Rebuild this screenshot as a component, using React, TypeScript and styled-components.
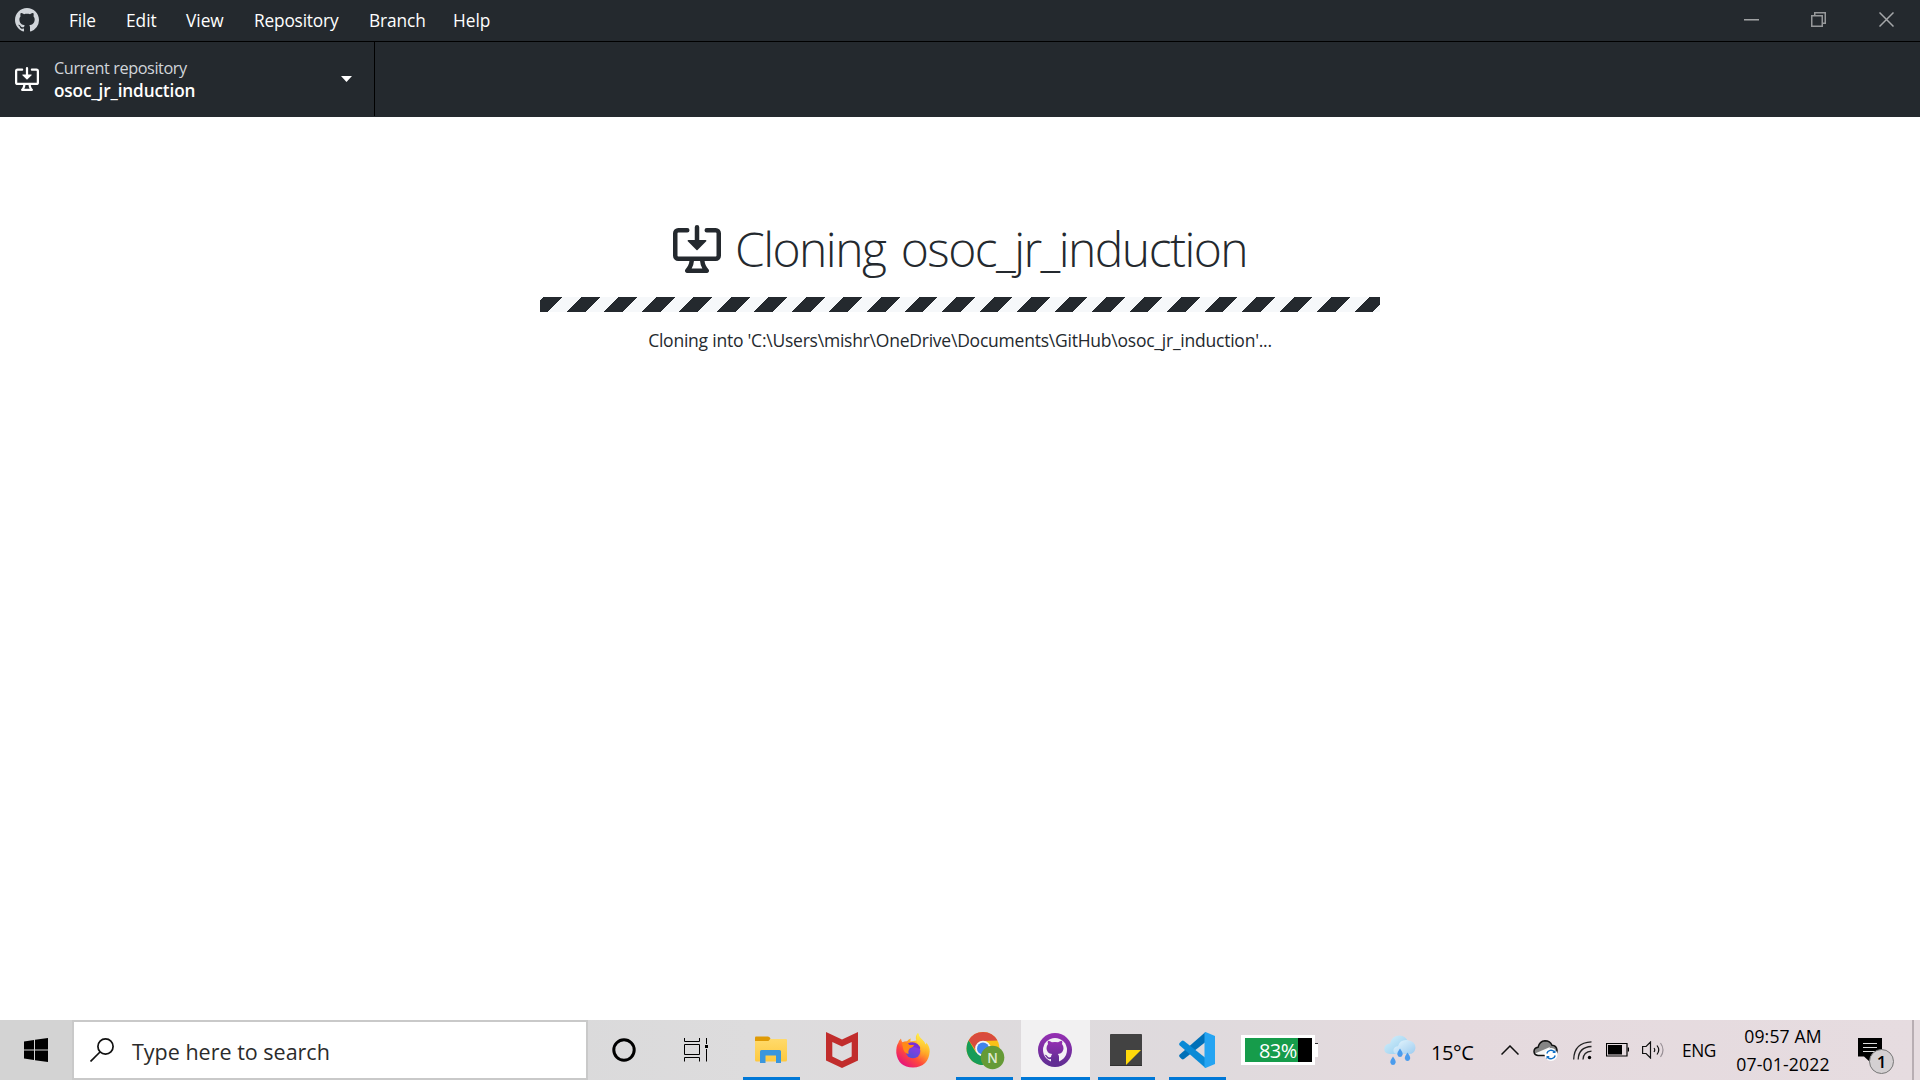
import React from "react";
import styled, { createGlobalStyle } from "styled-components";

const GlobalStyle = createGlobalStyle`
  * { box-sizing: border-box; }
  body { margin: 0; background: #fff; overflow: hidden; }
  svg { display: block; flex: none; }
`;

const Screen = styled.div`
  width: 1920px;
  height: 1080px;
  display: flex;
  flex-direction: column;
  background: #fff;
  color: #24292e;
  font-family: "Open Sans", "Noto Sans", sans-serif;
`;

const MenuBar = styled.header`
  height: 42px;
  flex: none;
  display: flex;
  align-items: center;
  padding: 0 0 1px 15px;
  background: #24292e;
  border-bottom: 1px solid #000;
`;

const Menus = styled.nav`
  display: flex;
  flex: 1;
  margin: 2px 0 0 15px;
`;

const MenuItem = styled.span<{ $w: number; $ls?: number }>`
  width: ${(p) => p.$w}px;
  padding-left: 15px;
  color: #fff;
  font-size: 17.3px;
  line-height: 24px;
  letter-spacing: ${(p) => p.$ls ?? 0}px;
  white-space: nowrap;
`;

const WindowButtons = styled.div`
  display: flex;
  height: 40px;
`;

const WindowButton = styled.div`
  width: 67.5px;
  display: flex;
  justify-content: center;
  align-items: center;
  padding-bottom: 1px;
`;

const Toolbar = styled.div`
  height: 75px;
  flex: none;
  display: flex;
  background: #24292e;
`;

const RepoButton = styled.div`
  width: 375px;
  height: 74px;
  display: flex;
  align-items: center;
  padding: 0 22px 0 15px;
  border-right: 1px solid #000;
`;

const RepoText = styled.div`
  flex: 1;
  margin-left: 15px;
  display: flex;
  flex-direction: column;
  white-space: nowrap;
`;

const RepoCaption = styled.span`
  color: #d1d5da;
  font-size: 16.3px;
  line-height: 22px;
  letter-spacing: -0.43px;
`;

const RepoName = styled.span`
  color: #fff;
  font-size: 17.2px;
  font-weight: 600;
  line-height: 23px;
  letter-spacing: -0.13px;
`;

const Main = styled.main`
  flex: 1;
  display: flex;
  flex-direction: column;
  align-items: center;
  padding-top: 98px;
`;

const Title = styled.h1`
  margin: 0;
  height: 68px;
  display: flex;
  align-items: center;
  font-size: 48px;
  font-weight: 300;
  line-height: 68px;
  letter-spacing: -1.55px;
  word-spacing: 4.5px;
  white-space: nowrap;
`;

const TitleText = styled.span`
  margin-left: 14px;
`;

const Progress = styled.div`
  width: 840px;
  height: 15px;
  margin-top: 14px;
  background: repeating-linear-gradient(
    135deg,
    #f6f8fa 0,
    #f6f8fa 2.8px,
    #24292e 2.8px,
    #24292e 16px,
    #f6f8fa 16px,
    #f6f8fa 26.52px
  );
`;

const Detail = styled.p`
  margin: 16px 0 0;
  font-size: 17.5px;
  line-height: 25px;
  letter-spacing: -0.23px;
  white-space: nowrap;
`;

const Taskbar = styled.footer`
  height: 60px;
  flex: none;
  display: flex;
  color: #000;
  background: linear-gradient(90deg, #d4d4d4 0, #d9d9da 500px, #dddcdd 750px, #dfdadd 1200px, #e5dade 1450px, #e6dce0 1920px);
`;

const Slot = styled.div<{ $w: number; $left?: number }>`
  width: ${(p) => p.$w}px;
  margin-left: ${(p) => p.$left ?? 0}px;
  flex: none;
  display: flex;
  align-items: center;
  justify-content: center;
`;

const StartSlot = styled(Slot)`
  background: #d3d3d3;
`;

const Search = styled.div`
  width: 516px;
  flex: none;
  display: flex;
  align-items: center;
  padding-left: 16px;
  background: #fff;
  border: 2px solid #c9c9c9;
`;

const SearchText = styled.span`
  margin: 3px 0 0 18px;
  color: #2b2b2b;
  font-size: 21.5px;
  line-height: 30px;
  white-space: nowrap;
`;

const Apps = styled.div`
  display: flex;
  margin-left: 4px;
`;

const AppTile = styled.div<{ $running?: boolean; $active?: boolean }>`
  width: ${(p) => (p.$active ? 69 : 57)}px;
  margin: 0 ${(p) => (p.$active ? 1 : 7)}px;
  flex: none;
  display: flex;
  align-items: center;
  justify-content: center;
  padding: 3px 1px 0 0;
  background: ${(p) => (p.$active ? "#f2f1f2" : "transparent")};
  border-bottom: 3px solid ${(p) => (p.$running ? "#0078d7" : "transparent")};
`;

const Meter = styled.div`
  width: 74px;
  height: 30px;
  flex: none;
  align-self: center;
  margin-left: 8px;
  padding: 3px 3px 3px 4px;
  background: #fff;
`;

const MeterFill = styled.div`
  height: 24px;
  padding-left: 14px;
  background: linear-gradient(90deg, #169c4b 53px, #000 53px);
  color: #fff;
  font-size: 20px;
  line-height: 26px;
  letter-spacing: -0.6px;
  white-space: nowrap;
`;

const MeterCap = styled.div`
  width: 3px;
  height: 14px;
  flex: none;
  align-self: center;
  background: #fff;
  border-top: 1px solid #333;
`;

const TrayText = styled.span<{ $size: number; $ls: number; $left?: number; $w?: number; $top?: number }>`
  width: ${(p) => (p.$w ? p.$w + "px" : "auto")};
  margin: ${(p) => p.$top ?? 0}px 0 0 ${(p) => p.$left ?? 0}px;
  flex: none;
  font-size: ${(p) => p.$size}px;
  letter-spacing: ${(p) => p.$ls}px;
  line-height: 28px;
  align-self: center;
  white-space: nowrap;
`;

const Clock = styled.div`
  width: 112px;
  flex: none;
  margin-left: 11px;
  display: flex;
  flex-direction: column;
  align-items: center;
  padding-top: 2px;
  font-size: 17.6px;
  line-height: 28px;
  letter-spacing: 0.15px;
  white-space: nowrap;
`;

const Notice = styled.div`
  position: relative;
  width: 36px;
  height: 36px;
  flex: none;
  margin: 18px 0 0 19px;
`;

const NoticeCount = styled.span`
  position: absolute;
  left: 11px;
  top: 11px;
  width: 25px;
  height: 25px;
  border: 1px solid #777;
  border-radius: 50%;
  background: #d4d0d2;
  font-size: 17px;
  font-weight: 600;
  line-height: 23px;
  text-align: center;
`;

const ShowDesktop = styled.div`
  width: 8px;
  flex: none;
  margin-left: auto;
  border-left: 2px solid #b8aeb3;
`;

const octocat =
  "M8 0C3.58 0 0 3.58 0 8c0 3.54 2.29 6.53 5.47 7.59.4.07.55-.17.55-.38 0-.19-.01-.82-.01-1.49-2.01.37-2.53-.49-2.69-.94-.09-.23-.48-.94-.82-1.13-.28-.15-.68-.52-.01-.53.63-.01 1.08.58 1.23.82.72 1.21 1.87.87 2.33.66.07-.52.28-.87.51-1.07-1.78-.2-3.64-.89-3.64-3.95 0-.87.31-1.59.82-2.15-.08-.2-.36-1.02.08-2.12 0 0 .67-.21 2.2.82.64-.18 1.32-.27 2-.27.68 0 1.36.09 2 .27 1.53-1.04 2.2-.82 2.2-.82.44 1.1.16 1.92.08 2.12.51.56.82 1.27.82 2.15 0 3.07-1.87 3.75-3.65 3.95.29.25.54.73.54 1.48 0 1.07-.01 1.93-.01 2.2 0 .21.15.46.55.38A8.013 8.013 0 0016 8c0-4.42-3.58-8-8-8z";

const CloneIcon = ({ size, color }: { size: number; color: string }) => (
  <svg width={size} height={size} viewBox="0 0 16 16" fill={color}>
    <path d="M4.927 5.427l2.896 2.896a.25.25 0 00.354 0l2.896-2.896A.25.25 0 0010.896 5H8.75V.75a.75.75 0 10-1.5 0V5H5.104a.25.25 0 00-.177.427z" />
    <path fillRule="evenodd" d="M1.573 2.573a.25.25 0 00-.073.177v7.5a.25.25 0 00.25.25h12.5a.25.25 0 00.25-.25v-7.5a.25.25 0 00-.25-.25h-3a.75.75 0 110-1.5h3A1.75 1.75 0 0116 2.75v7.5A1.75 1.75 0 0114.25 12h-3.727c.099 1.041.52 1.872 1.292 2.757A.75.75 0 0111.25 16h-6.5a.75.75 0 01-.565-1.243c.772-.885 1.192-1.716 1.292-2.757H1.75A1.75 1.75 0 010 10.25v-7.5A1.75 1.75 0 011.75 1h3a.75.75 0 010 1.5h-3a.25.25 0 00-.177.073zM6.982 12a5.72 5.72 0 01-.765 2.5h3.566a5.72 5.72 0 01-.765-2.5H6.982z" />
  </svg>
);

const ExplorerIcon = () => (
  <svg width="32" height="28" viewBox="0 0 32 28">
    <defs>
      <linearGradient id="folder" x2="0" y2="1"><stop stopColor="#ffda6b" /><stop offset="1" stopColor="#fec93f" /></linearGradient>
    </defs>
    <path d="M0 5h13l2.500-2H31q1 0 1 1v20q0 1.500-1.500 1.500h-29Q0 25.500 0 24z" fill="url(#folder)" />
    <path d="M0 1.500Q0 .5 1 .5h12q2 .5 2.500 2.200L13.500 5H0z" fill="#df9a05" />
    <path d="M5 27V15.500q0-1.500 1.500-1.500h18q1.500 0 1.500 1.500V27h-5v-7.500H10.500V27z" fill="#3a96dd" />
  </svg>
);

const McAfeeIcon = () => (
  <svg width="32" height="36" viewBox="0 0 32 36">
    <path d="M0 0l16 7.500L32 0v28.500L16 36 0 28.500zM6.300 10v14.600L16 29.200l9.700-4.600V10L16 14.600z" fill="#c12d2c" fillRule="evenodd" />
  </svg>
);

const FirefoxIcon = () => (
  <svg width="34" height="35" viewBox="0 0 34 35">
    <defs>
      <linearGradient id="fxbody" x1=".85" y1=".1" x2=".2" y2=".95"><stop stopColor="#fff044" /><stop offset=".35" stopColor="#ffa726" /><stop offset=".65" stopColor="#ff4a3c" /><stop offset="1" stopColor="#e5127d" /></linearGradient>
      <linearGradient id="fxglobe" x1=".8" x2=".3" y2="1"><stop stopColor="#9a35e8" /><stop offset="1" stopColor="#5150d8" /></linearGradient>
      <linearGradient id="fxtail" x2="0" y2="1"><stop stopColor="#fff24b" /><stop offset="1" stopColor="#ffa727" stopOpacity="0" /></linearGradient>
    </defs>
    <path d="M2.500 9.500Q3 7.500 5 5.500q.2 2.500 1.500 3.700Q8.500 8 11 8.200 13 6 15 5.600q-1 1.500-.5 3l6-1Q18.500 3.500 22 0q.8 4 4 6.500 2.500 2 3.500 5 .8-.6.800-2Q34 14 33.700 18.500 32.500 34 17 34.500 2 34 .3 20 0 13 2.500 9.500z" fill="url(#fxbody)" />
    <circle cx="17" cy="18" r="7.300" fill="url(#fxglobe)" />
    <path d="M12 10.500q5-2.500 9.500.5 3.500 2.500 2.500 5l-4-1.500q-3-1.500-5 1l-4-2z" fill="#7a2fd6" />
    <path d="M6 10q5-1.500 7.500 2h4.500q-.5 2-4.500 3.500-2 3-1 5.500-5-1-5.500-6z" fill="#ff8a16" />
    <path d="M22 0q.8 4 4 6.500 3.500 3 3.500 8.500 0 9-8 12 5.500-7 2.500-13-4.500-5-3.500-8.500Q20.500 2 22 0z" fill="url(#fxtail)" />
  </svg>
);

const ChromeIcon = () => (
  <svg width="42" height="40" viewBox="0 0 42 40">
    <circle cx="20" cy="18.500" r="16.500" fill="#fbc116" />
    <path d="M5.700 10.300A16.500 16.500 0 0 0 20 35l7-12-14-.5z" fill="#169c58" />
    <path d="M5.700 10.300A16.500 16.500 0 0 1 34.500 10.500L20 11l-6 11z" fill="#d94b3d" />
    <circle cx="20" cy="18.500" r="7.800" fill="#f3f5f8" />
    <circle cx="20" cy="18.500" r="6" fill="#3f83ed" />
    <circle cx="29.500" cy="27.500" r="11.800" fill="#659a36" />
    <text x="29.500" y="32.600" textAnchor="middle" fontSize="13.500" fontWeight="600" fill="#dfead4" fontFamily="Open Sans">N</text>
  </svg>
);

const GitHubTile = () => (
  <svg width="34" height="34" viewBox="0 0 34 34">
    <defs><linearGradient id="ghp" x2="0" y2="1"><stop stopColor="#962fb3" /><stop offset="1" stopColor="#5d2d91" /></linearGradient></defs>
    <circle cx="17" cy="17" r="17" fill="url(#ghp)" />
    <circle cx="17" cy="17" r="12" fill="#f3f0f5" />
    <path d="M10 11q-.7-2 .1-3.300 2 0 3.800 1.600 3.100-.7 6.200 0 1.800-1.600 3.800-1.600.8 1.300.1 3.300 1.500 1.700 1.500 4.200 0 5-5.700 5.800 1.200 1.200 1.200 3v5.500h-8v-3.500q-3.500.7-4.700-2-.7-1.500-1.900-2.200 2-.6 3.200 1.600 1.100 1.500 3.400.7.200-2 1.200-3.100-5.700-.8-5.700-5.800Q8.500 12.700 10 11z" fill="url(#ghp)" />
  </svg>
);

const StickyIcon = () => (
  <svg width="32" height="32" viewBox="0 0 32 32">
    <rect width="32" height="32" rx=".8" fill="#424242" />
    <path d="M0 31h32v1H0z" fill="#303030" />
    <path d="M16 16h15L16 31z" fill="#ffd90b" />
  </svg>
);

const CodeIcon = () => (
  <svg width="36" height="36" viewBox="0 0 36 36">
    <path d="M26.500 0v10L5 27Q3.700 27.800 2.700 26.900L.6 25Q-.4 23.700.8 22.600z" fill="#0070b8" />
    <path d="M26.500 36V26L5 9Q3.700 8.200 2.700 9.100L.6 11Q-.4 12.300.8 13.400z" fill="#0a8ad6" />
    <path d="M26.500 0L36 4v28l-9.500 4q-1 0-1-1.500V1.500Q25.500 0 26.500 0z" fill="#25a4f2" />
  </svg>
);

const WeatherIcon = () => (
  <svg width="32" height="31" viewBox="0 0 32 31">
    <defs>
      <linearGradient id="cloudA" x2="1" y2="1"><stop stopColor="#d9f2fb" /><stop offset="1" stopColor="#8fc9ee" /></linearGradient>
      <linearGradient id="cloudB" x2="1" y2="1"><stop stopColor="#e9f7fd" /><stop offset="1" stopColor="#9dccf0" /></linearGradient>
    </defs>
    <path d="M6 19Q0 18.500.3 13.500.8 9 6 8.500 8 .5 15.500.5 22 .5 24 7l-4 12z" fill="url(#cloudA)" />
    <path d="M12 19q-3-1-2.500-4.500.8-3 4.500-3.200Q16 4.500 23 5q8.500 1 8.500 8-1 6-6.500 6z" fill="url(#cloudB)" />
    <path d="M9 21.500q3 4 2.700 6Q11 30 9 30t-2.700-2.500Q6 25.500 9 21.500zM16 13.500q3 4 2.700 6Q18 22 16 22t-2.700-2.500q-.3-2 2.700-6zM23.500 17.500q3 4 2.700 6-.7 2.500-2.700 2.500t-2.700-2.500q-.3-2 2.700-6z" fill="#4b9ced" />
  </svg>
);

const OneDriveIcon = () => (
  <svg width="25" height="22" viewBox="0 0 25 22">
    <path d="M5 16.500Q1 16 1 12.300 1.200 9 5 8.300 6.500 2 12 1.700q5 0 7 4.500 4.500.3 5 5 0 5-4.500 5.300z" fill="#858585" />
    <path d="M2 14.500l15-6.500-3 8.500H5q-2-.3-3-2z" fill="#f4f4f4" />
    <path d="M5 16.500Q1 16 1 12.300 1.200 9 5 8.300 6.500 2 12 1.700q5 0 7 4.500 4.500.3 5 5 0 5-4.500 5.300z" fill="none" stroke="#111" strokeWidth="1.500" />
    <circle cx="18" cy="15.500" r="6.500" fill="#fff" />
    <path d="M13.800 14.500a4.300 4.300 0 0 1 7.500-1.700M22.200 16.500a4.300 4.300 0 0 1-7.500 1.700" fill="none" stroke="#0f6fc6" strokeWidth="1.400" />
    <path d="M22.500 10.800v3.200h-3.200zM13.500 20.200V17h3.200z" fill="#0f6fc6" />
  </svg>
);

const menus: [string, number, number][] = [
  ["File", 57, -0.1],
  ["Edit", 60, 0],
  ["View", 68, 0],
  ["Repository", 115, -0.18],
  ["Branch", 84, -0.1],
  ["Help", 70, 0],
];

export default function App() {
  return (
    <Screen>
      <GlobalStyle />
      <MenuBar>
        <svg width="24" height="24" viewBox="0 0 16 16" fill="#d1d5da"><path d={octocat} /></svg>
        <Menus>
          {menus.map(([name, w, ls]) => (
            <MenuItem key={name} $w={w} $ls={ls}>{name}</MenuItem>
          ))}
        </Menus>
        <WindowButtons>
          <WindowButton>
            <svg width="15" height="15" viewBox="0 0 15 15"><path d="M0 7h15v1H0z" fill="#a0a2a4" /><path d="M0 8h15v1H0z" fill="#66696c" /></svg>
          </WindowButton>
          <WindowButton>
            <svg width="15" height="15" viewBox="0 0 15 15" fill="none" stroke="#96989a" strokeWidth="1.500"><path d="M.75 3.750h10.500v10.500H.75zM3.750 3V.75h10.500v10.500H12" /></svg>
          </WindowButton>
          <WindowButton>
            <svg width="15" height="15" viewBox="0 0 15 15" stroke="#a5a7a9" strokeWidth="1.500"><path d="M.5.500l14 14M14.500.500l-14 14" /></svg>
          </WindowButton>
        </WindowButtons>
      </MenuBar>
      <Toolbar>
        <RepoButton>
          <CloneIcon size={24} color="#fff" />
          <RepoText>
            <RepoCaption>Current repository</RepoCaption>
            <RepoName>osoc_jr_induction</RepoName>
          </RepoText>
          <svg width="11" height="6" viewBox="0 0 11 6"><path d="M0 0h11L5.500 6z" fill="#fff" /></svg>
        </RepoButton>
      </Toolbar>
      <Main>
        <Title>
          <CloneIcon size={48} color="#24292e" />
          <TitleText>Cloning osoc_jr_induction</TitleText>
        </Title>
        <Progress />
        <Detail>Cloning into 'C:\Users\mishr\OneDrive\Documents\GitHub\osoc_jr_induction'...</Detail>
      </Main>
      <Taskbar>
        <StartSlot $w={72}>
          <svg width="24" height="24" viewBox="0 0 24 24"><path d="M0 3.400L10 2v9.500H0zM11 1.800L24 0v11.500H11zM0 12.500h10V22L0 20.600zM11 12.500h13V24l-13-1.800z" /></svg>
        </StartSlot>
        <Search>
          <svg width="24" height="24" viewBox="0 0 24 24" fill="none" stroke="#111" strokeWidth="1.700"><circle cx="15.500" cy="8.500" r="7.600" /><path d="M10 14L.5 23.500" /></svg>
          <SearchText>Type here to search</SearchText>
        </Search>
        <Slot $w={72}>
          <svg width="24" height="24" viewBox="0 0 24 24"><circle cx="12" cy="12" r="10.200" fill="none" stroke="#000" strokeWidth="3" /></svg>
        </Slot>
        <Slot $w={72}>
          <svg width="24" height="24" viewBox="0 0 24 24" fill="none" stroke="#000">
            <path d="M.5 0v3.500h15V0M.5 6.500h15v10H.5zM.5 23.500v-4h15v4M22.500 0v6M22.500 11v12.500" />
            <path d="M21 7h3v3h-3z" fill="#000" stroke="none" />
          </svg>
        </Slot>
        <Apps>
          <AppTile $running><ExplorerIcon /></AppTile>
          <AppTile><McAfeeIcon /></AppTile>
          <AppTile><FirefoxIcon /></AppTile>
          <AppTile $running><ChromeIcon /></AppTile>
          <AppTile $running $active><GitHubTile /></AppTile>
          <AppTile $running><StickyIcon /></AppTile>
          <AppTile $running><CodeIcon /></AppTile>
        </Apps>
        <Meter><MeterFill>83%</MeterFill></Meter>
        <MeterCap />
        <Slot $w={32} $left={66}><WeatherIcon /></Slot>
        <TrayText $size={20} $ls={-0.4} $left={15} $w={70} $top={5}>15°C</TrayText>
        <Slot $w={18}>
          <svg width="18" height="10" viewBox="0 0 18 10" fill="none" stroke="#111" strokeWidth="1.500"><path d="M.5 9.500L9 1l8.500 8.500" /></svg>
        </Slot>
        <Slot $w={25} $left={14}><OneDriveIcon /></Slot>
        <Slot $w={19} $left={15}>
          <svg width="19" height="19" viewBox="0 0 19 19" fill="none" stroke="#222" strokeWidth="1.300">
            <path d="M.7 18.500Q1 1.500 18.500.800M5.200 18.500Q5.500 6.200 18.500 5.500M10 18.500Q10.300 10.800 18.500 10.200" />
            <circle cx="16.500" cy="16.500" r="1.700" fill="#000" stroke="none" />
          </svg>
        </Slot>
        <Slot $w={23} $left={14}>
          <svg width="23" height="14" viewBox="0 0 23 14"><path d="M.5.500h20.500v12.500H.5zM22.500 4.500v4" fill="none" stroke="#000" strokeWidth="1.200" /><path d="M2 2h14v9.500H2z" /></svg>
        </Slot>
        <Slot $w={23} $left={13}>
          <svg width="23" height="18" viewBox="0 0 23 18" fill="none" stroke="#111" strokeWidth="1.200">
            <path d="M.6 5.500h3.500L8.500 1v16l-4.400-4.500H.6zM12 7q1.500 2 0 4M15 4.500q3.500 4.500 0 9" />
            <path d="M18.500 2q5 7 0 14" stroke="#999096" />
          </svg>
        </Slot>
        <TrayText $size={17.3} $ls={-0.4} $left={17} $w={34} $top={2}>ENG</TrayText>
        <Clock>
          <span>09:57 AM</span>
          <span>07-01-2022</span>
        </Clock>
        <Notice>
          <svg width="24" height="24" viewBox="0 0 24 24"><path d="M0 0h24v18.500H12V24l-6-5.500H0z" /><path d="M5 5.500h14M5 9.500h14M5 13.500h14" stroke="#ddd" /></svg>
          <NoticeCount>1</NoticeCount>
        </Notice>
        <ShowDesktop />
      </Taskbar>
    </Screen>
  );
}
